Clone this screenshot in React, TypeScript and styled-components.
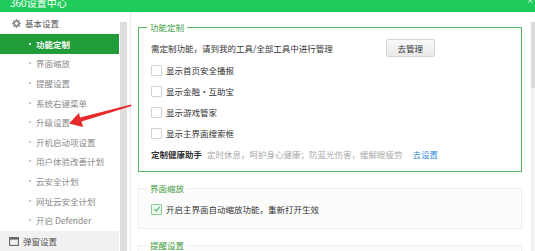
import React from "react";
import styled, { createGlobalStyle } from "styled-components";

const GlobalStyle = createGlobalStyle`
  html, body {
    margin: 0;
    padding: 0;
    background: #fff;
    overflow: hidden;
  }
  body {
    font-family: "Noto Sans CJK SC", "Noto Sans", sans-serif;
    -webkit-font-smoothing: antialiased;
  }
  *, *::before, *::after {
    box-sizing: border-box;
  }
`;

/* ── Frame ── */
const Window = styled.div`
  position: relative;
  width: 535px;
  height: 251px;
  display: flex;
  flex-direction: column;
  overflow: hidden;
  background: #fff;
`;

const TitleBar = styled.div`
  height: 12px;
  flex-shrink: 0;
  background: #1fcb5b;
  display: flex;
  align-items: flex-end;
  justify-content: space-between;
  padding: 0 1px 3px 10px;
  overflow: hidden;
  color: #fff;
  font-size: 10px;
  line-height: 12px;
`;

const CloseMark = styled.span`
  font-size: 8px;
  line-height: 8px;
  margin-bottom: 5px;
`;

const Main = styled.div`
  flex: 1;
  display: flex;
  min-height: 0;
`;

/* ── Sidebar ── */
const Sidebar = styled.nav`
  width: 119px;
  flex-shrink: 0;
  display: flex;
  flex-direction: column;
`;

const GroupHeader = styled.div<{ shaded?: boolean }>`
  height: ${({ shaded }) => (shaded ? "21px" : "22px")};
  flex-shrink: 0;
  margin-top: ${({ shaded }) => (shaded ? "1px" : "0")};
  display: flex;
  align-items: center;
  gap: 4px;
  padding-left: ${({ shaded }) => (shaded ? "9px" : "12px")};
  background: ${({ shaded }) => (shaded ? "#f1f1f1" : "transparent")};
  color: #555;
  font-size: 8.5px;
`;

const NavItem = styled.div<{ active?: boolean }>`
  height: 19.6px;
  flex-shrink: 0;
  display: flex;
  align-items: center;
  padding-left: 29px;
  gap: 5px;
  font-size: 8.5px;
  background: ${({ active }) => (active ? "#219c39" : "transparent")};
  color: ${({ active }) => (active ? "#fff" : "#8a8a8a")};
  font-weight: ${({ active }) => (active ? 600 : 400)};
  &::before {
    content: "";
    width: 2px;
    height: 2px;
    border-radius: 50%;
    background: ${({ active }) => (active ? "#fff" : "#b5b5b5")};
  }
`;

const SideScroll = styled.div`
  width: 7px;
  margin: 10px 3px 0 1px;
  background: #dedede;
`;

const Divider = styled.div`
  width: 1px;
  background: #ececec;
`;

/* ── Content ── */
const Content = styled.div`
  flex: 1;
  display: flex;
  flex-direction: column;
  gap: 10px;
  padding: 9px 0 0 7px;
  min-width: 0;
`;

const Section = styled.fieldset<{ accent?: boolean }>`
  margin: 0;
  width: 384px;
  flex-shrink: 0;
  padding: 0 0 ${({ accent }) => (accent ? "6.5px" : "8.5px")} 12px;
  border: ${({ accent }) => (accent ? "1.5px solid #57b55d" : "1px solid #eeeeee")};
  background: ${({ accent }) => (accent ? "#fff" : "#fbfcfb")};
  min-width: 0;
`;

const Legend = styled.legend`
  margin-left: -4px;
  padding: 0 3px;
  font-size: 8.5px;
  line-height: 12px;
  color: #3f9c3f;
`;

const InfoRow = styled.div`
  height: 18px;
  margin-top: 6px;
  display: flex;
  align-items: center;
  gap: 53px;
  font-size: 8.5px;
  color: #333;
`;

const ManageButton = styled.button`
  width: 49px;
  height: 18px;
  padding: 0;
  border: 1px solid #d6d6d6;
  border-radius: 2px;
  background: linear-gradient(#f9f9f9, #e9e9e9);
  font-family: inherit;
  font-size: 8.5px;
  color: #333;
`;

const OptionList = styled.div<{ top: number }>`
  margin-top: ${({ top }) => top}px;
  display: flex;
  flex-direction: column;
`;

const OptionRow = styled.label`
  height: 21px;
  display: flex;
  align-items: center;
  gap: 4px;
  font-size: 8.5px;
  color: #333;
`;

const Box = styled.span<{ checked?: boolean }>`
  width: 11px;
  height: 11px;
  flex-shrink: 0;
  border: 1px solid ${({ checked }) => (checked ? "#86c992" : "#d2d2d2")};
  border-radius: 1px;
  background: ${({ checked }) => (checked ? "#eef8f0" : "#fff")};
  display: flex;
  align-items: center;
  justify-content: center;
`;

const HealthRow = styled.div`
  height: 21px;
  display: flex;
  align-items: center;
  font-size: 8.5px;
`;

const HealthTitle = styled.span`
  color: #333;
  font-weight: 600;
  margin-right: 5px;
`;

const HealthDesc = styled.span`
  color: #aaa;
  margin-right: 10px;
`;

const Link = styled.a`
  color: #2f8fe0;
  text-decoration: none;
`;

const RightScroll = styled.div`
  width: 4px;
  margin-top: 10px;
  display: flex;
  flex-direction: column;
  background: #f1f1f1;
  &::before {
    content: "";
    height: 66px;
    background: #dcdcdc;
  }
`;

/* ── Overlays ── */
const Arrow = styled.svg`
  position: absolute;
  left: 0;
  top: 0;
  pointer-events: none;
`;

const Gear = () => (
  <svg width="9" height="9" viewBox="0 0 16 16">
    <path
      fill="#8c8c8c"
      d="M7 0h2l.4 2.1 1.4.6 1.8-1.2 1.4 1.4-1.2 1.8.6 1.4L16 7v2l-2.1.4-.6 1.4 1.2 1.8-1.4 1.4-1.8-1.2-1.4.6L9 16H7l-.4-2.1-1.4-.6-1.8 1.2-1.4-1.4 1.2-1.8-.6-1.4L0 9V7l2.1-.4.6-1.4-1.2-1.8 1.4-1.4 1.8 1.2 1.4-.6z"
    />
    <circle cx="8" cy="8" r="2.6" fill="#fff" />
  </svg>
);

const WindowIcon = () => (
  <svg width="10" height="9" viewBox="0 0 10 9">
    <rect x="0.6" y="0.6" width="8.8" height="7.8" fill="none" stroke="#666" strokeWidth="1.1" />
    <rect x="0.6" y="0.6" width="8.8" height="2" fill="#666" />
  </svg>
);

const Check = () => (
  <svg width="8" height="8" viewBox="0 0 8 8">
    <path d="M1.2 4.2 3.2 6 6.8 1.8" fill="none" stroke="#4caf5e" strokeWidth="1.1" />
  </svg>
);

const navItems = [
  "功能定制",
  "界面缩放",
  "提醒设置",
  "系统右键菜单",
  "升级设置",
  "开机启动项设置",
  "用户体验改善计划",
  "云安全计划",
  "网址云安全计划",
  "开启 Defender",
];

const options = ["显示首页安全播报", "显示金融・互助宝", "显示游戏管家", "显示主界面搜索框"];

export default function App() {
  return (
    <Window>
      <GlobalStyle />
      <TitleBar>
        <span>360设置中心</span>
        <CloseMark>×</CloseMark>
      </TitleBar>
      <Main>
        <Sidebar>
          <GroupHeader>
            <Gear />
            基本设置
          </GroupHeader>
          {navItems.map((item, i) => (
            <NavItem key={item} active={i === 0}>
              {item}
            </NavItem>
          ))}
          <GroupHeader shaded>
            <WindowIcon />
            弹窗设置
          </GroupHeader>
        </Sidebar>
        <SideScroll />
        <Divider />
        <Content>
          <Section accent>
            <Legend>功能定制</Legend>
            <InfoRow>
              <span>需定制功能，请到我的工具/全部工具中进行管理</span>
              <ManageButton>去管理</ManageButton>
            </InfoRow>
            <OptionList top={2.5}>
              {options.map((o) => (
                <OptionRow key={o}>
                  <Box />
                  {o}
                </OptionRow>
              ))}
              <HealthRow>
                <HealthTitle>定制健康助手</HealthTitle>
                <HealthDesc>定时休息，呵护身心健康；防蓝光伤害，缓解眼疲劳</HealthDesc>
                <Link>去设置</Link>
              </HealthRow>
            </OptionList>
          </Section>
          <Section>
            <Legend>界面缩放</Legend>
            <OptionList top={4.5}>
              <OptionRow>
                <Box checked>
                  <Check />
                </Box>
                开启主界面自动缩放功能，重新打开生效
              </OptionRow>
            </OptionList>
          </Section>
          <Section>
            <Legend>提醒设置</Legend>
          </Section>
        </Content>
        <RightScroll />
      </Main>
      <Arrow width="535" height="251" viewBox="0 0 535 251">
        <path d="M131 104.5 L80 117.5 L79 113 L69 123.5 L83 127 L81.5 121.5 L131.5 106 Z" fill="#e8292b" />
      </Arrow>
    </Window>
  );
}
